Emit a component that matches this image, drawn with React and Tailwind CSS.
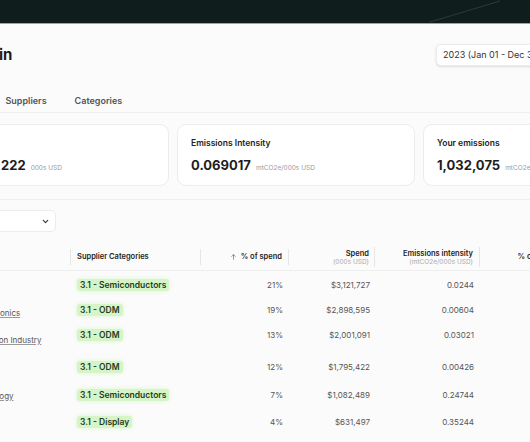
import React from 'react';

const rows = [
  { name: 'Intel', cat: '3.1 - Semiconductors', pct: '21%', spend: '$3,121,727', ei: '0.0244', h: 'h-[28px]', dy: '' },
  { name: 'Samsung Electronics', cat: '3.1 - ODM', pct: '19%', spend: '$2,898,595', ei: '0.00604', h: 'h-[22px]', dy: 'mt-[5px]' },
  { name: 'Hon Hai Precision Industry', cat: '3.1 - ODM', pct: '13%', spend: '$2,001,091', ei: '0.03021', h: 'h-[28px]', dy: 'mt-[10px]' },
  { name: 'Wistron', cat: '3.1 - ODM', pct: '12%', spend: '$1,795,422', ei: '0.00426', h: 'h-[36px]', dy: '' },
  { name: 'Micron Technology', cat: '3.1 - Semiconductors', pct: '7%', spend: '$1,082,489', ei: '0.24744', h: 'h-[20px]', dy: 'mt-[1px]' },
  { name: 'BOE', cat: '3.1 - Display', pct: '4%', spend: '$631,497', ei: '0.35244', h: 'h-[34px]', dy: '' },
];

function StatCard({ title, value, unit }) {
  return (
    <div className="w-[238px] h-[62px] shrink-0 rounded-[9px] border border-[#ececec] bg-white px-[13px] pt-[12px]">
      <div className="text-[8.5px] font-semibold text-[#222]">{title}</div>
      <div className="mt-[9px] flex items-baseline gap-[5px]">
        <span className="text-[13px] font-bold text-[#1d1d1d] leading-none">{value}</span>
        <span className="text-[6.5px] text-[#9a9a9a]">{unit}</span>
      </div>
    </div>
  );
}

export default function App() {
  return (
    <div className="w-[530px] h-[442px] overflow-hidden bg-[#fbfbfb]" style={{ fontFamily: 'Inter, "Noto Sans", sans-serif' }}>
      {/* Top bar */}
      <div className="relative h-[24px] bg-[#101d1d] border-b border-[#9aa4a2]">
        <svg className="absolute left-[420px] top-0" width="110" height="23" viewBox="0 0 110 23">
          <line x1="10" y1="22" x2="80" y2="1" stroke="#2c3a3a" strokeWidth="1" />
        </svg>
      </div>

      <div className="ml-[-69px] w-[720px]">
        {/* Title row */}
        <div className="mt-[20px] flex h-[22px] items-center">
          <h1 className="w-[521px] ml-[-16px] text-[15px] font-bold text-[#1a1a1a]">Supply Chain</h1>
          <div className="h-[22px] flex items-center rounded-[5px] border border-[#ececec] bg-white px-[6px] text-[9px] text-[#333] shadow-sm">
            2023 (Jan 01 - Dec 31)
          </div>
        </div>

        {/* Tabs */}
        <div className="mt-[24px] flex h-[23px] items-center gap-[28px] border-b border-[#efefef] pl-[5px] text-[9px] font-semibold text-[#555]">
          <span>Overview</span>
          <span>Suppliers</span>
          <span>Categories</span>
        </div>

        {/* Cards */}
        <div className="mt-[11px] flex gap-[8px] pb-[13px] border-b border-[#efefef]">
          <StatCard title="Total spend" value="$14,962,222" unit="000s USD" />
          <StatCard title="Emissions Intensity" value="0.069017" unit="mtCO2e/000s USD" />
          <StatCard title="Your emissions" value="1,032,075" unit="mtCO2e" />
        </div>

        {/* Filter */}
        <div className="mt-[10px] flex h-[22px] w-[125px] items-center justify-between rounded-[5px] border border-[#ececec] bg-white pl-[8px] pr-[5px] text-[9px] text-[#444]">
          <span>All suppliers</span>
          <svg width="9" height="9" viewBox="0 0 24 24" fill="none" stroke="#333" strokeWidth="3" strokeLinecap="round" strokeLinejoin="round">
            <path d="m6 9 6 6 6-6" />
          </svg>
        </div>

        {/* Table */}
        <div className="mt-[12px]">
          <div className="flex h-[27px] items-center border-b border-[#efefef] text-[7.5px] font-semibold text-[#222]">
            <div className="w-[140px] h-[16px] border-r border-[#e6e6e6] pl-[10px] flex items-center">Supplier</div>
            <div className="w-[130px] h-[16px] border-r border-[#e6e6e6] pl-[6px] flex items-center">Supplier Categories</div>
            <div className="w-[88px] h-[16px] border-r border-[#e6e6e6] pr-[6px] flex items-center justify-end gap-[4px]">
              <svg width="7" height="8" viewBox="0 0 24 24" fill="none" stroke="#555" strokeWidth="2" strokeLinecap="round">
                <path d="M12 20V4M6 10l6-6 6 6" />
              </svg>
              <span>% of spend</span>
            </div>
            <div className="w-[86px] h-[20px] border-r border-[#e6e6e6] pr-[5px] flex flex-col items-end justify-center leading-[9.5px] pt-[2px]">
              <span>Spend</span>
              <span className="text-[6.5px] font-normal text-[#aaa]">(000s USD)</span>
            </div>
            <div className="w-[105px] h-[20px] border-r border-[#e6e6e6] pr-[6px] flex flex-col items-end justify-center leading-[9.5px] pt-[2px]">
              <span>Emissions intensity</span>
              <span className="text-[6.5px] font-normal text-[#aaa]">(mtCO2e/000s USD)</span>
            </div>
            <div className="w-[99px] h-[16px] pr-[6px] flex items-center justify-end">% of emissions</div>
          </div>

          {rows.map((r) => (
            <div key={r.name} className={`flex items-center text-[8px] text-[#555] ${r.h}`}>
              <div className="w-[140px] pl-[10px]">
                <span className={`block underline decoration-[#999] ${r.dy}`}>{r.name}</span>
              </div>
              <div className="w-[130px] pl-[6px]">
                <span className="inline-block rounded-[3px] bg-[#d5f5c8] px-[3px] text-[8.5px] font-semibold leading-[12px] text-[#1f3a1f] shadow-[0_0_4px_#d8f7cc]">
                  {r.cat}
                </span>
              </div>
              <div className="w-[88px] pr-[6px] text-right">{r.pct}</div>
              <div className="w-[86px] pr-[5px] text-right">{r.spend}</div>
              <div className="w-[105px] pr-[6px] text-right">{r.ei}</div>
              <div className="w-[99px] pr-[6px] text-right">{r.pct}</div>
            </div>
          ))}
        </div>
      </div>
    </div>
  );
}
